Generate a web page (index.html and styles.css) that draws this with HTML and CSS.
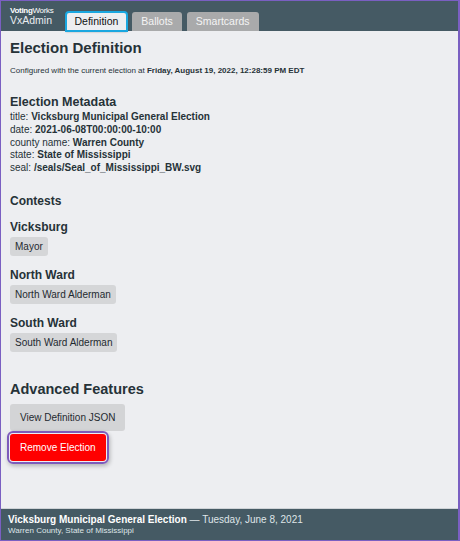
FILE: index.html
```html
<!DOCTYPE html>
<html lang="en">
<head>
<meta charset="utf-8">
<title>VxAdmin - Definition</title>
<link rel="stylesheet" href="styles.css">
</head>
<body>
<div class="app">
  <header class="topbar">
    <div class="brand">
      <div class="brand-org"><b>Voting</b>Works</div>
      <div class="brand-app">VxAdmin</div>
    </div>
    <nav class="tabs">
      <span class="tab tab-active">Definition</span>
      <span class="tab">Ballots</span>
      <span class="tab">Smartcards</span>
    </nav>
  </header>
  <main class="main">
    <h1 class="title">Election Definition</h1>
    <p class="configured">Configured with the current election at <strong>Friday, August 19, 2022, 12:28:59 PM EDT</strong></p>
    <h2 class="h-meta">Election Metadata</h2>
    <div class="meta">
      <div>title: <strong>Vicksburg Municipal General Election</strong></div>
      <div>date: <strong>2021-06-08T00:00:00-10:00</strong></div>
      <div>county name: <strong>Warren County</strong></div>
      <div>state: <strong>State of Mississippi</strong></div>
      <div>seal: <strong>/seals/Seal_of_Mississippi_BW.svg</strong></div>
    </div>
    <h3 class="h-contests">Contests</h3>
    <section class="district">
      <h4 class="district-name">Vicksburg</h4>
      <span class="chip">Mayor</span>
    </section>
    <section class="district">
      <h4 class="district-name">North Ward</h4>
      <span class="chip">North Ward Alderman</span>
    </section>
    <section class="district">
      <h4 class="district-name">South Ward</h4>
      <span class="chip">South Ward Alderman</span>
    </section>
    <h2 class="h-adv">Advanced Features</h2>
    <div class="actions">
      <button class="btn" type="button">View Definition JSON</button>
      <button class="btn btn-danger" type="button">Remove Election</button>
    </div>
  </main>
  <footer class="footer">
    <div class="footer-title"><strong>Vicksburg Municipal General Election</strong> — Tuesday, June 8, 2021</div>
    <div class="footer-sub">Warren County, State of Mississippi</div>
  </footer>
</div>
</body>
</html>
```

FILE: styles.css
```css
html, body {
  margin: 0;
  padding: 0;
  height: 541px;
}
body {
  font-family: "Liberation Sans", Arial, sans-serif;
  color: #263238;
  background: #edeef1;
}
.app {
  box-sizing: border-box;
  height: 541px;
  display: flex;
  flex-direction: column;
  border: 1px solid #7a5fc2;
  border-right-width: 2px;
  overflow: hidden;
}
.topbar {
  height: 30px;
  flex: none;
  background: #455a64;
  display: flex;
  align-items: flex-end;
  padding-left: 9px;
  gap: 12px;
}
.brand {
  align-self: stretch;
  padding-top: 5px;
  color: #ffffff;
}
.brand-org {
  font-size: 8px;
  line-height: 9px;
  letter-spacing: -0.3px;
}
.brand-app {
  font-size: 10.5px;
  line-height: 11px;
  color: #e9edf0;
}
.tabs {
  display: flex;
  gap: 5px;
}
.tab {
  display: block;
  height: 19px;
  line-height: 19px;
  padding: 0 9px;
  font-size: 10.5px;
  border-radius: 3px 3px 0 0;
  background: #a9aaab;
  color: #f4f4f4;
}
.tab-active {
  background: #edeef1;
  color: #111111;
  outline: 2px solid #1aa7e0;
  outline-offset: -1px;
  box-shadow: 0 1px 2px rgba(0,0,0,0.35);
}
.main {
  flex: 1;
  padding: 8px 9px 0;
}
.title {
  margin: 0;
  font-size: 15px;
  line-height: 18px;
  font-weight: bold;
}
.configured {
  margin: 9px 0 0;
  font-size: 8px;
  line-height: 10px;
}
.h-meta {
  margin: 19px 0 0;
  font-size: 12.5px;
  line-height: 15px;
  font-weight: bold;
}
.meta {
  margin-top: 1px;
  font-size: 10px;
  line-height: 12.75px;
}
.h-contests {
  margin: 19px 0 0;
  font-size: 12px;
  line-height: 14px;
  font-weight: bold;
}
.district {
  margin-top: 12px;
}
.district-name {
  margin: 0 0 2px;
  font-size: 12px;
  line-height: 14px;
  font-weight: bold;
}
.chip {
  display: inline-block;
  height: 19px;
  line-height: 19px;
  padding: 0 5px;
  font-size: 10px;
  background: #d5d6d8;
  border-radius: 3px;
  color: #1f2a30;
}
.h-adv {
  margin: 29px 0 0;
  font-size: 14.5px;
  line-height: 17px;
  font-weight: bold;
}
.actions {
  margin-top: 6px;
  display: flex;
  flex-direction: column;
  align-items: flex-start;
  gap: 3px;
}
.btn {
  font-family: "Liberation Sans", Arial, sans-serif;
  font-size: 10px;
  height: 27px;
  padding: 0 10px;
  border: none;
  border-radius: 3px;
  background: #d3d4d6;
  color: #1f2a30;
}
.btn-danger {
  background: #ff0000;
  color: #ffffff;
  outline: 2px solid #7d5bbb;
  outline-offset: 1px;
  box-shadow: 0 0 0 3px #edeef1, 1px 2px 4px 3px rgba(0,0,0,0.25);
}
.footer {
  flex: none;
  box-sizing: border-box;
  height: 32px;
  border-top: 1px solid #cfd3d7;
  background: #455a64;
  color: #ffffff;
  padding: 5px 7px 0;
}
.footer-title {
  font-size: 10px;
  line-height: 12px;
  color: #dfe5e8;
}
.footer-title strong {
  color: #ffffff;
}
.footer-sub {
  font-size: 8px;
  line-height: 10px;
  color: #dfe5e8;
}
```
